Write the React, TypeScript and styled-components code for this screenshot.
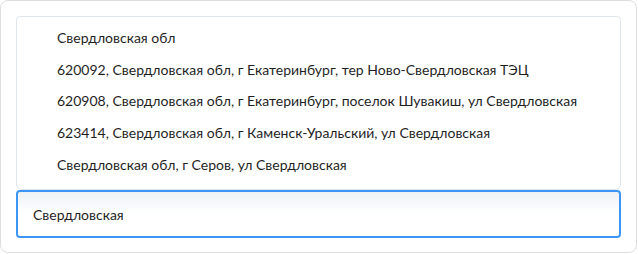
import styled, { createGlobalStyle } from "styled-components";

const GlobalStyle = createGlobalStyle`
  html, body {
    margin: 0;
    padding: 0;
    background: #ffffff;
  }
  body {
    font-family: "Lato", "Open Sans", sans-serif;
    color: #222222;
  }
`;

const options = [
  "Свердловская обл",
  "620092, Свердловская обл, г Екатеринбург, тер Ново-Свердловская ТЭЦ",
  "620908, Свердловская обл, г Екатеринбург, поселок Шувакиш, ул Свердловская",
  "623414, Свердловская обл, г Каменск-Уральский, ул Свердловская",
  "Свердловская обл, г Серов, ул Свердловская",
];

const Card = styled.div`
  box-sizing: border-box;
  width: 637px;
  height: 253px;
  margin: 0;
  border: 1px solid #dedede;
  border-radius: 8px;
  padding: 15px 15px 0 15px;
  display: flex;
  flex-direction: column;
`;

const Suggestions = styled.ul`
  box-sizing: border-box;
  list-style: none;
  margin: 0;
  padding: 5px 0 8px 0;
  height: 174px;
  border: 1px solid #dfe6ee;
  border-radius: 4px 4px 6px 6px;
  background: #ffffff;
`;

const Option = styled.li`
  padding: 0 0 0 40px;
  height: 31.6px;
  display: flex;
  align-items: center;
  font-size: 14px;
  color: #1f1f1f;
  white-space: nowrap;
`;

const Field = styled.input`
  box-sizing: border-box;
  width: 100%;
  height: 48px;
  margin-top: 0;
  padding: 0 15px;
  border: 2px solid #3d96f5;
  border-radius: 4px;
  outline: none;
  font-family: "Lato", "Open Sans", sans-serif;
  font-size: 14px;
  color: #1f1f1f;
  background: linear-gradient(to bottom, #eef2f6 0px, #ffffff 22px);
`;

export default function App() {
  return (
    <>
      <GlobalStyle />
      <Card>
        <Suggestions>
          {options.map((o) => (
            <Option key={o}>{o}</Option>
          ))}
        </Suggestions>
        <Field defaultValue="Свердловская" />
      </Card>
    </>
  );
}
